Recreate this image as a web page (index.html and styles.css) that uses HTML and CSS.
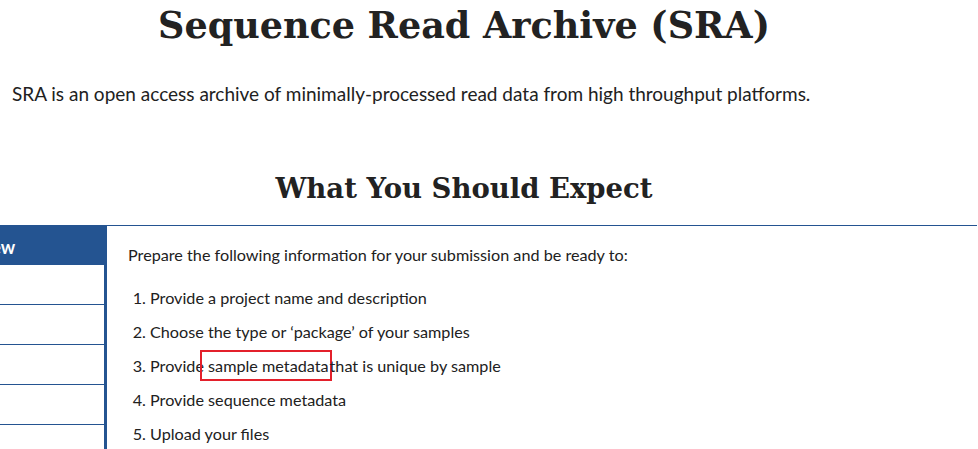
FILE: index.html
```html
<!DOCTYPE html>
<html lang="en">
<head>
<meta charset="utf-8">
<title>Sequence Read Archive (SRA)</title>
<link rel="stylesheet" href="styles.css">
</head>
<body>
<header class="intro">
  <h1 class="title">Sequence Read Archive (SRA)</h1>
  <p class="lead">SRA is an open access archive of minimally-processed read data from high throughput platforms.</p>
</header>
<section class="expect">
  <h2 class="section-title">What You Should Expect</h2>
  <div class="panel">
    <nav class="sidebar">
      <div class="side-head">Overview</div>
      <div class="side-row"></div>
      <div class="side-row"></div>
      <div class="side-row"></div>
      <div class="side-row"></div>
      <div class="side-row"></div>
    </nav>
    <div class="content">
      <p class="content-intro">Prepare the following information for your submission and be ready to:</p>
      <ol class="steps">
        <li>Provide a project name and description</li>
        <li>Choose the type or ‘package’ of your samples</li>
        <li>Provide <span class="mark">sample metadata</span>that is unique by sample</li>
        <li>Provide sequence metadata</li>
        <li>Upload your files</li>
      </ol>
    </div>
  </div>
</section>
</body>
</html>
```
FILE: styles.css
```css
html, body {
  margin: 0;
  padding: 0;
  background: #ffffff;
  color: #212121;
  font-family: Lato, "Open Sans", sans-serif;
  overflow: hidden;
}
.intro {
  padding: 0 62px 0 12px;
}
.title {
  margin: 0;
  padding-top: 1px;
  text-align: center;
  font-family: "DejaVu Serif", serif;
  font-weight: 700;
  font-size: 36.5px;
  line-height: 50px;
  color: #222222;
}
.lead {
  margin: 29px 0 0 0;
  font-size: 19px;
  line-height: 28px;
}
.section-title {
  margin: 60px 50px 0 0;
  text-align: center;
  font-family: "DejaVu Serif", serif;
  font-weight: 700;
  font-size: 27.5px;
  line-height: 40px;
  color: #222222;
}
.panel {
  display: flex;
  margin: 17px 1px 0 -73px;
  border-top: 1px solid #245491;
}
.sidebar {
  width: 177px;
  flex: none;
  border-right: 3px solid #245491;
  margin-top: -1px;
}
.side-head {
  height: 40px;
  margin-right: -3px;
  padding-left: 10px;
  background: #245491;
  color: #ffffff;
  font-weight: 700;
  font-size: 18px;
  line-height: 44px;
}
.side-row {
  height: 39px;
  border-bottom: 1px solid #245491;
}
.content {
  flex: 1;
  padding: 17px 0 0 21px;
}
.content-intro {
  margin: 0;
  font-size: 16.2px;
  line-height: 24px;
}
.steps {
  margin: 14px 0 0 0;
  padding: 0 0 0 22px;
  font-size: 16.2px;
  line-height: 34px;
}
.mark {
  display: inline-block;
  outline: 2px solid #e3202b;
  line-height: 27px;
  padding: 0 1px 0 6px;
  margin-left: -6px;
}
```
